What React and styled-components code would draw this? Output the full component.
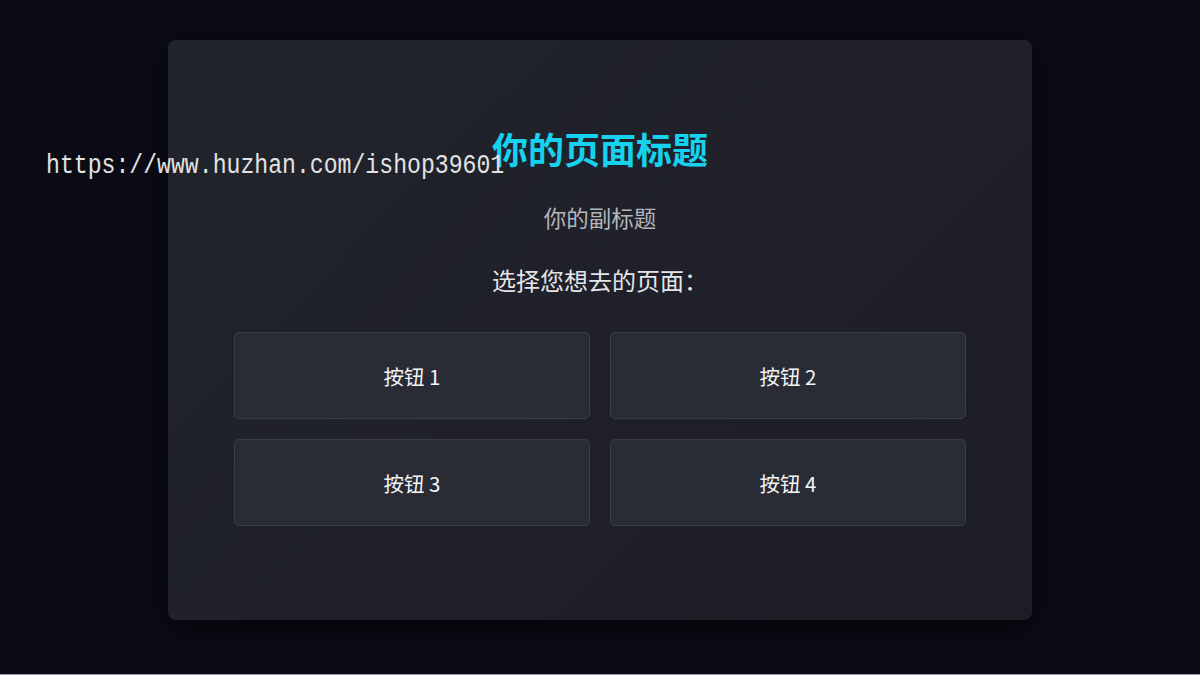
import React from "react";
import styled, { createGlobalStyle } from "styled-components";

const Global = createGlobalStyle`
  html, body { margin: 0; padding: 0; background: #0a0b14; }
  body { font-family: "Noto Sans CJK SC", "Noto Sans", sans-serif; }
  * { box-sizing: border-box; }
`;

const Page = styled.div`
  position: relative;
  width: 1200px;
  height: 675px;
  background: #0a0b14;
  border-bottom: 1px solid #9c9c9f;
  display: flex;
  justify-content: center;
  padding-top: 40px;
  overflow: hidden;
`;

const Card = styled.main`
  width: 864px;
  height: 580px;
  border-radius: 8px;
  background: linear-gradient(135deg, #22242c 0%, #1f2029 50%, #1c1d25 100%);
  box-shadow: 0 6px 24px rgba(0, 0, 0, 0.55);
  display: flex;
  flex-direction: column;
  align-items: center;
  padding-top: 86px;
`;

const Title = styled.h1`
  margin: 0;
  font-size: 36px;
  line-height: 44px;
  font-weight: 700;
  color: #16d2ee;
`;

const Subtitle = styled.p`
  margin: 30px 0 0;
  font-size: 22.5px;
  line-height: 34px;
  color: #b2b5bb;
`;

const Prompt = styled.p`
  margin: 29px 0 0;
  font-size: 24px;
  line-height: 34px;
  color: #e4e5e8;
`;

const Grid = styled.div`
  margin-top: 35px;
  width: 732px;
  display: grid;
  grid-template-columns: 1fr 1fr;
  gap: 20px;
`;

const NavButton = styled.button`
  height: 87px;
  border-radius: 5px;
  border: 1px solid #3a3d47;
  background: #292c35;
  color: #f4f5f7;
  font-family: "Noto Sans CJK SC", "Noto Sans", sans-serif;
  font-size: 20.5px;
  cursor: pointer;
  display: flex;
  align-items: center;
  justify-content: center;
`;

const Watermark = styled.div`
  position: absolute;
  left: 46px;
  top: 151px;
  font-family: "Liberation Mono", "DejaVu Sans Mono", monospace;
  font-size: 27px;
  line-height: 30px;
  color: #e2e2e2;
  white-space: nowrap;
  transform: scaleX(0.857);
  transform-origin: left top;
  pointer-events: none;
`;

export default function App() {
  const buttons = ["按钮 1", "按钮 2", "按钮 3", "按钮 4"];
  return (
    <Page>
      <Global />
      <Card>
        <Title>你的页面标题</Title>
        <Subtitle>你的副标题</Subtitle>
        <Prompt>选择您想去的页面：</Prompt>
        <Grid>
          {buttons.map((b) => (
            <NavButton key={b}>{b}</NavButton>
          ))}
        </Grid>
      </Card>
      <Watermark>https://www.huzhan.com/ishop39601</Watermark>
    </Page>
  );
}
